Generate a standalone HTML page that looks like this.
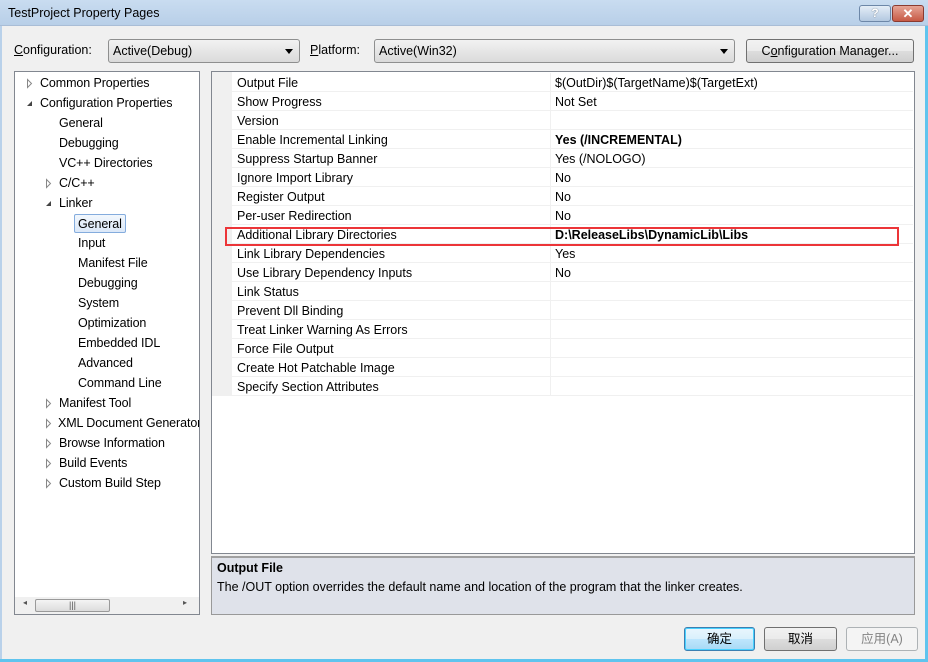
<!DOCTYPE html>
<html><head><meta charset="utf-8"><style>
*{margin:0;padding:0;box-sizing:border-box}
body{width:928px;height:662px;overflow:hidden;background:#f0f0f0;font-family:"Liberation Sans","Noto Sans CJK SC",sans-serif;font-size:12.5px;color:#000;position:relative}
.a{position:absolute;white-space:nowrap}
.t{position:absolute;white-space:nowrap;line-height:20px;height:20px;letter-spacing:-0.1px}
.r{position:absolute;left:232px;width:681px;height:19px;border-bottom:1px solid #f0f0f0;line-height:20px}
.r span{position:absolute;left:5px}
.r b,.r i{position:absolute;left:323px;font-style:normal}
.r:before{content:"";position:absolute;left:318px;top:0;bottom:-1px;border-left:1px solid #f0f0f0}
.btn{position:absolute;border:1px solid #707070;border-radius:3px;background:linear-gradient(#f2f2f2,#ebebeb 50%,#dddddd 51%,#cfcfcf);text-align:center;line-height:22px}
</style></head><body>
<div class="a" style="left:0;top:0;width:928px;height:26px;background:linear-gradient(#c9dcf0,#b8cfe8);border-bottom:1px solid #a9bdd6"></div>
<div class="a" style="left:8px;top:6px;font-size:12.5px">TestProject Property Pages</div>
<div class="a" style="left:859px;top:5px;width:32px;height:17px;border:1px solid #6d87a8;border-radius:3px;background:linear-gradient(#e4edf7,#b3c8e0);text-align:center;font-size:12px;line-height:15px;color:#fff;font-weight:bold;text-shadow:0 0 1px #345">?</div>
<div class="a" style="left:892px;top:5px;width:32px;height:17px;border:1px solid #8a3a30;border-radius:3px;background:linear-gradient(#e6a596,#c75a45);text-align:center;font-size:13px;line-height:15px;color:#fff;font-weight:bold">✕</div>
<div class="a" style="left:925px;top:26px;width:3px;height:636px;background:#5fc4ee"></div>
<div class="a" style="left:0;top:26px;width:2px;height:636px;background:#b9d1ea"></div>
<div class="a" style="left:0;top:659px;width:928px;height:3px;background:#5fc4ee"></div>
<div class="a" style="left:14px;top:43px"><u>C</u>onfiguration:</div>
<div class="a" style="left:108px;top:39px;width:192px;height:24px;border:1px solid #8e8f8f;border-radius:3px;background:linear-gradient(#f2f2f2,#e6e6e6 50%,#dadada);padding-left:4px;line-height:23px">Active(Debug)<span style="position:absolute;right:6px;top:9px;border:4px solid transparent;border-top:5px solid #000;border-bottom:0"></span></div>
<div class="a" style="left:310px;top:43px"><u>P</u>latform:</div>
<div class="a" style="left:374px;top:39px;width:361px;height:24px;border:1px solid #8e8f8f;border-radius:3px;background:linear-gradient(#f2f2f2,#e6e6e6 50%,#dadada);padding-left:4px;line-height:23px">Active(Win32)<span style="position:absolute;right:6px;top:9px;border:4px solid transparent;border-top:5px solid #000;border-bottom:0"></span></div>
<div class="btn" style="left:746px;top:39px;width:168px;height:24px;line-height:23px">C<u>o</u>nfiguration Manager...</div>
<div class="a" style="left:14px;top:71px;width:186px;height:544px;background:#fff;border:1px solid #828790;overflow:hidden">
<div style="position:relative;left:-15px;top:-71px">
<div class="t" style="left:40px;top:72px">Common Properties</div>
<div class="t" style="left:40px;top:92px">Configuration Properties</div>
<div class="t" style="left:59px;top:112px">General</div>
<div class="t" style="left:59px;top:132px">Debugging</div>
<div class="t" style="left:59px;top:152px">VC++ Directories</div>
<div class="t" style="left:59px;top:172px">C/C++</div>
<div class="t" style="left:59px;top:192px">Linker</div>
<div class="t" style="left:74px;top:213px;height:19px;line-height:18px;width:52px;border:1px solid #84acdd;border-radius:2px;background:linear-gradient(#f2f7fd,#dbe8f8);padding-left:3px">General</div>
<div class="t" style="left:78px;top:232px">Input</div>
<div class="t" style="left:78px;top:252px">Manifest File</div>
<div class="t" style="left:78px;top:272px">Debugging</div>
<div class="t" style="left:78px;top:292px">System</div>
<div class="t" style="left:78px;top:312px">Optimization</div>
<div class="t" style="left:78px;top:332px">Embedded IDL</div>
<div class="t" style="left:78px;top:352px">Advanced</div>
<div class="t" style="left:78px;top:372px">Command Line</div>
<div class="t" style="left:59px;top:392px">Manifest Tool</div>
<div class="t" style="left:58px;top:412px">XML Document Generator</div>
<div class="t" style="left:59px;top:432px">Browse Information</div>
<div class="t" style="left:59px;top:452px">Build Events</div>
<div class="t" style="left:59px;top:472px">Custom Build Step</div>
<svg class="a" style="left:0;top:0" width="60" height="500">
<g fill="#fff" stroke="#888"><path d="M27.5 78.5l4 4-4 4z"/><path d="M46.5 178.5l4 4-4 4z"/><path d="M46.5 398.5l4 4-4 4z"/><path d="M46.5 418.5l4 4-4 4z"/><path d="M46.5 438.5l4 4-4 4z"/><path d="M46.5 458.5l4 4-4 4z"/><path d="M46.5 478.5l4 4-4 4z"/></g>
<g fill="#444"><path d="M32 100l-5 5h5z"/><path d="M51 200l-5 5h5z"/></g>
</svg>
</div>
<div class="a" style="left:0;top:525px;width:184px;height:17px;background:#f0f0f0"></div>
<div class="a" style="left:20px;top:527px;width:75px;height:13px;border:1px solid #9a9a9a;border-radius:2px;background:linear-gradient(#f4f4f4,#dcdcdc);font-size:9px;text-align:center;line-height:11px;color:#555">|||</div>
<div class="a" style="left:8px;top:526px;font-size:8px;color:#555">◂</div>
<div class="a" style="left:168px;top:526px;font-size:8px;color:#555">▸</div>
</div>
<div class="a" style="left:211px;top:71px;width:704px;height:483px;background:#fff;border:1px solid #828790"></div>
<div class="a" style="left:212px;top:72px;width:20px;height:324px;background:#f0f0f0"></div>
<div class="r" style="top:73px"><span>Output File</span><i>$(OutDir)$(TargetName)$(TargetExt)</i></div>
<div class="r" style="top:92px"><span>Show Progress</span><i>Not Set</i></div>
<div class="r" style="top:111px"><span>Version</span></div>
<div class="r" style="top:130px"><span>Enable Incremental Linking</span><b>Yes (/INCREMENTAL)</b></div>
<div class="r" style="top:149px"><span>Suppress Startup Banner</span><i>Yes (/NOLOGO)</i></div>
<div class="r" style="top:168px"><span>Ignore Import Library</span><i>No</i></div>
<div class="r" style="top:187px"><span>Register Output</span><i>No</i></div>
<div class="r" style="top:206px"><span>Per-user Redirection</span><i>No</i></div>
<div class="r" style="top:225px"><span>Additional Library Directories</span><b>D:\ReleaseLibs\DynamicLib\Libs</b></div>
<div class="r" style="top:244px"><span>Link Library Dependencies</span><i>Yes</i></div>
<div class="r" style="top:263px"><span>Use Library Dependency Inputs</span><i>No</i></div>
<div class="r" style="top:282px"><span>Link Status</span></div>
<div class="r" style="top:301px"><span>Prevent Dll Binding</span></div>
<div class="r" style="top:320px"><span>Treat Linker Warning As Errors</span></div>
<div class="r" style="top:339px"><span>Force File Output</span></div>
<div class="r" style="top:358px"><span>Create Hot Patchable Image</span></div>
<div class="r" style="top:377px"><span>Specify Section Attributes</span></div>
<div class="a" style="left:225px;top:227px;width:674px;height:19px;border:2px solid #ec3538"></div>
<div class="a" style="left:211px;top:556px;width:704px;height:59px;background:#dfe2ea;border:1px solid #999;border-top:2px solid #a0a0a0"></div>
<div class="a" style="left:217px;top:561px;font-weight:bold">Output File</div>
<div class="a" style="left:217px;top:580px">The /OUT option overrides the default name and location of the program that the linker creates.</div>
<div class="btn" style="left:684px;top:627px;width:71px;height:24px;border-color:#3c7fb1;background:linear-gradient(#eaf6fd,#d9f0fc 50%,#bee6fd 51%,#a7d9f5);box-shadow:inset 0 0 0 1px #48d1ff">确定</div>
<div class="btn" style="left:764px;top:627px;width:73px;height:24px">取消</div>
<div class="btn" style="left:846px;top:627px;width:72px;height:24px;border-color:#adb2b5;background:#f4f4f4;color:#838383">应用(A)</div>
</body></html>
